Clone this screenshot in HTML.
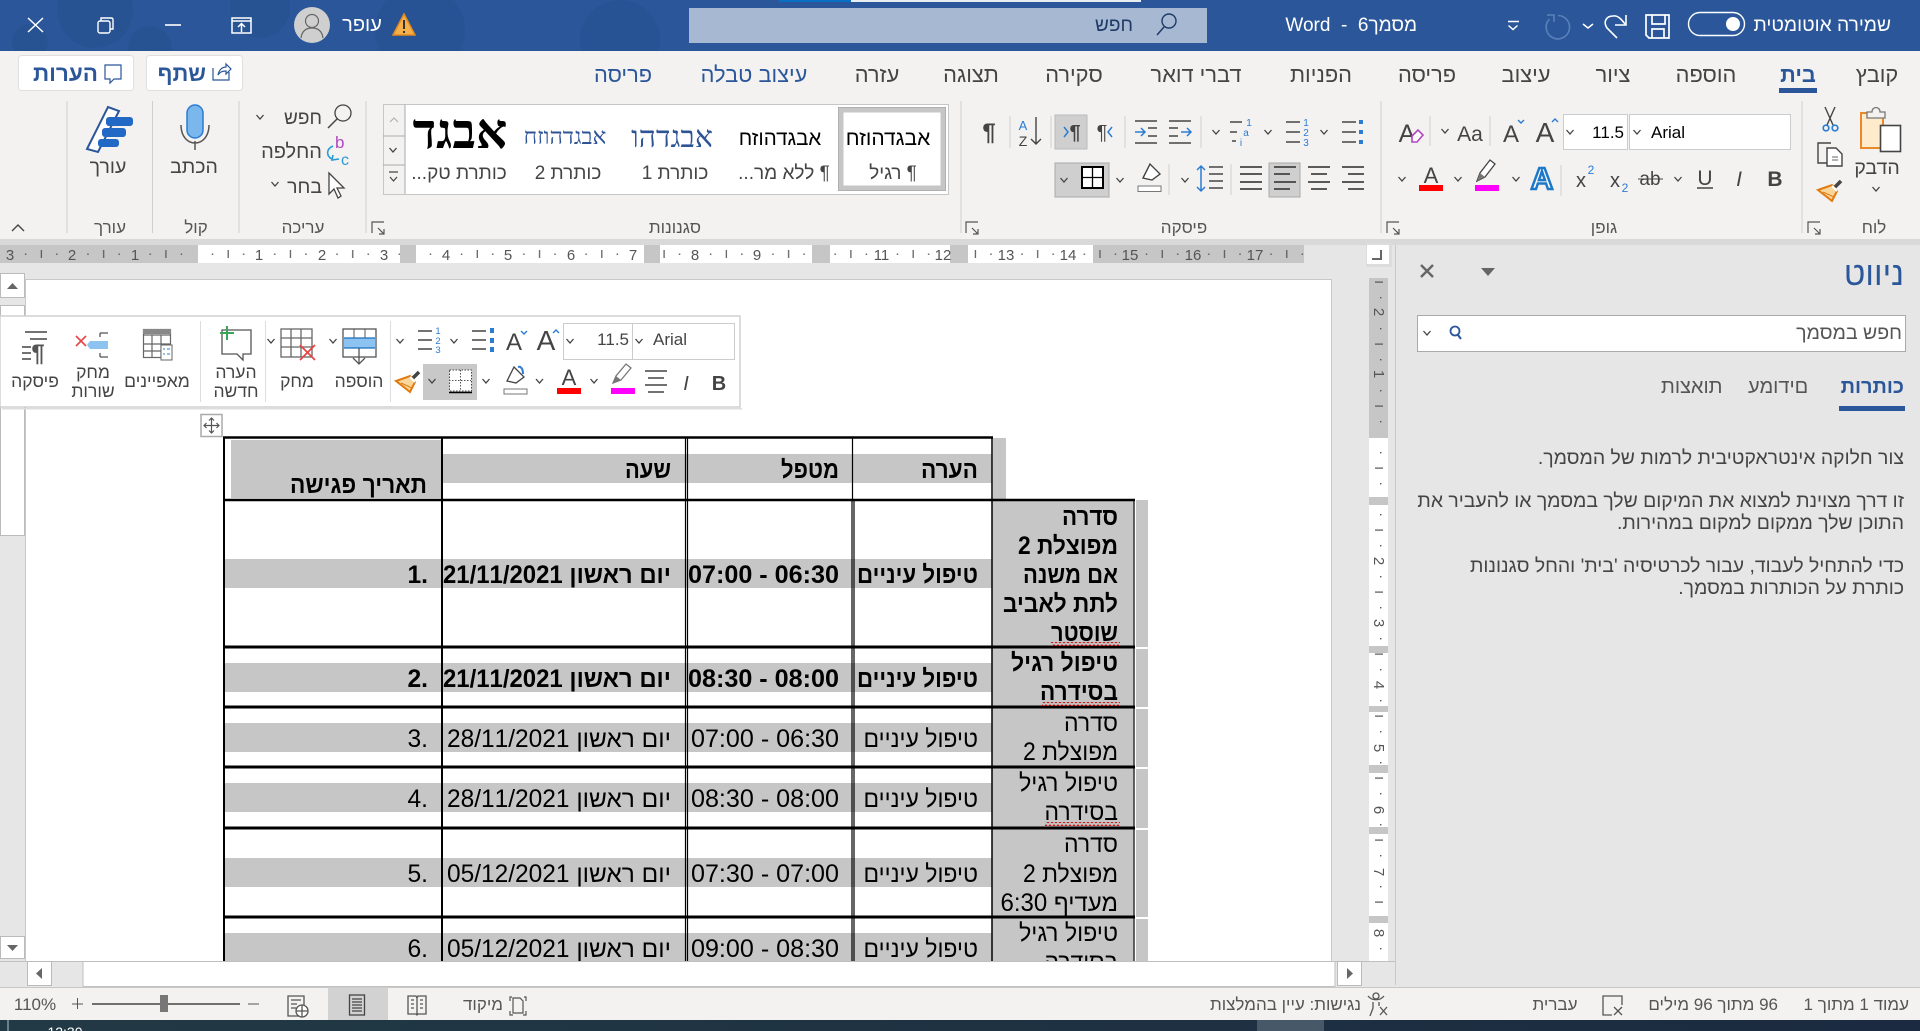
<!DOCTYPE html>
<html lang="he"><head><meta charset="utf-8"><title>Word</title>
<style>
html,body{margin:0;padding:0;background:#e6e6e6;width:1920px;height:1031px;overflow:hidden}
svg{display:block;position:absolute;left:0;top:0;font-family:"Liberation Sans",sans-serif}
text{direction:rtl;white-space:pre}
.c{text-anchor:middle}
.r{text-anchor:start}
.tab{font-size:21.8px;fill:#444}
.g{font-size:17px;fill:#555;text-anchor:middle}
.l{font-size:19.5px;fill:#444;text-anchor:middle}
.f{font-size:17.5px;fill:#444;text-anchor:middle}
.td{font-size:24.6px;fill:#000;text-anchor:start}
.b{font-weight:bold}
.st{font-size:17px;fill:#555}
.nv{font-size:19.4px;fill:#444;text-anchor:start}
.ru{font-size:15px;fill:#555;text-anchor:middle;direction:ltr}
.i{fill:none;stroke:#444;stroke-width:1.5}
.bl{fill:none;stroke:#2b7cd3;stroke-width:1.5}
.sh{fill:#c6c6c6}
.bdo{position:absolute;top:377px;font:20px/20px "Liberation Sans",sans-serif;color:#555;white-space:nowrap}
</style></head><body>
<svg width="1920" height="1031" viewBox="0 0 1920 1031" xmlns="http://www.w3.org/2000/svg">
<defs>
<symbol id="ch" overflow="visible"><path d="M-3.5 -2 L0 2 L3.5 -2" fill="none" stroke="#444" stroke-width="1.3"/></symbol>
<pattern id="hr" x="197" y="245" width="62.27" height="18" patternUnits="userSpaceOnUse">
<rect x="14.8" y="8.5" width="1.4" height="1.4" fill="#555"/><rect x="30.6" y="5" width="1.2" height="8" fill="#555"/><rect x="46" y="8.5" width="1.4" height="1.4" fill="#555"/></pattern>
<pattern id="vr" x="1369" y="437" width="19" height="62" patternUnits="userSpaceOnUse">
<rect x="11" y="15" width="1.4" height="1.4" fill="#555"/><rect x="6" y="30.5" width="8" height="1.2" fill="#555"/><rect x="11" y="46" width="1.4" height="1.4" fill="#555"/></pattern>
<pattern id="sq" x="0" y="0" width="4" height="4" patternUnits="userSpaceOnUse"><path d="M0 3L2 .8L4 3" fill="none" stroke="#c00" stroke-width=".9"/></pattern>
<clipPath id="doc"><rect x="0" y="279" width="1400" height="682"/></clipPath>
</defs>

<!-- title bar -->
<rect width="1920" height="51" fill="#2b579a"/>
<g fill="#25508f" opacity=".55"><circle cx="95" cy="10" r="38"/><circle cx="150" cy="48" r="22"/><circle cx="260" cy="8" r="30"/><circle cx="420" cy="30" r="45"/><circle cx="620" cy="40" r="40"/><circle cx="30" cy="42" r="18"/></g>
<rect x="779" y="0" width="72" height="2" fill="#0a6ec4"/><rect x="851" y="0" width="290" height="2" fill="#e8ecf3"/>
<rect x="689" y="8" width="518" height="35" fill="#a6b8d2"/>
<text x="1133" y="31" class="r" font-size="19" fill="#1e3a66">חפש</text>
<circle cx="1169" cy="21" r="7" fill="none" stroke="#1e3a66" stroke-width="1.4"/><path d="M1164 27L1157 35" stroke="#1e3a66" stroke-width="1.5"/>
<text x="1417" y="31" class="r" font-size="19" fill="#fff">מסמך6  -  Word</text>
<path d="M1508 21.500h11M1508.500 25.500l4.500 4 4.500-4" fill="none" stroke="#fff" stroke-width="1.500"/>
<path d="M1558 15.500a11.700 11.700 0 1 1-8.500 3.500M1547 15h7v7" fill="none" stroke="#5a80b8" stroke-width="1.600"/>
<path d="M1583 24l5 4 5-4" fill="none" stroke="#fff" stroke-width="1.500"/>
<path d="M1617 38L1607 28C1603 22 1606 16 1613 16C1618 15 1622 20 1625 24M1626 15V25H1615" fill="none" stroke="#fff" stroke-width="1.600"/>
<g fill="none" stroke="#fff" stroke-width="1.700"><path d="M1646 15H1669V38H1649L1646 35Z"/><path d="M1652 15v9h13v-9M1652 38v-9h12v9"/></g>
<rect x="1688.5" y="12.5" width="56" height="23" rx="11.5" fill="none" stroke="#fff" stroke-width="1.4"/><circle cx="1733" cy="24" r="7" fill="#fff"/>
<text x="1891" y="31" class="r" font-size="19.200" fill="#fff">שמירה אוטומטית</text>
<path d="M28 18L43 32M43 18L28 32" stroke="#fff" stroke-width="1.5"/>
<g fill="none" stroke="#fff" stroke-width="1.4"><rect x="98" y="21" width="12" height="12" rx="2"/><path d="M101 21v-3h10c2 0 2 1 2 2v9h-3"/></g>
<path d="M165 25H181" stroke="#fff" stroke-width="1.6"/>
<g fill="none" stroke="#fff" stroke-width="1.5"><rect x="232" y="18" width="19" height="15"/><path d="M232 21H251M241.5 32v-8M238 27l3.5-3.5 3.5 3.5"/></g>
<circle cx="312" cy="25" r="18" fill="#cfcfcf"/><g fill="none" stroke="#666" stroke-width="1.2"><circle cx="312" cy="21" r="6.5"/><path d="M301 38c1-7 5-10 11-10s10 3 11 10"/></g>
<text x="362" y="31" class="c" font-size="20" fill="#fff">עופר</text>
<path d="M404 14L415 35H393Z" fill="#f6b04a" stroke="#e08a20" stroke-width="1.5"/><path d="M404 20v9M404 31v2" stroke="#333" stroke-width="2"/>

<!-- ribbon -->
<rect y="51" width="1920" height="188" fill="#f3f2f1"/>
<rect y="239" width="1920" height="6" fill="#d9d9d9"/>
<text x="1877" y="82" class="c tab">קובץ</text>
<text x="1798" y="82" class="c tab b" style="fill:#2b579a">בית</text>
<text x="1706" y="82" class="c tab">הוספה</text>
<text x="1613" y="82" class="c tab">ציור</text>
<text x="1526" y="82" class="c tab">עיצוב</text>
<text x="1427" y="82" class="c tab">פריסה</text>
<text x="1321" y="82" class="c tab">הפניות</text>
<text x="1196" y="82" class="c tab">דברי דואר</text>
<text x="1074" y="82" class="c tab">סקירה</text>
<text x="971" y="82" class="c tab">תצוגה</text>
<text x="877" y="82" class="c tab">עזרה</text>
<text x="754" y="82" class="c tab" style="fill:#2b579a">עיצוב טבלה</text>
<text x="623" y="82" class="c tab" style="fill:#2b579a">פריסה</text>
<rect x="1779" y="88" width="38" height="5" fill="#2b579a"/>
<rect x="146.5" y="55.5" width="96" height="35" rx="3" fill="#fff" stroke="#e1dfdd"/>
<text x="206" y="81" class="r b" font-size="22" fill="#2b579a">שתף</text>
<g fill="none" stroke="#2b579a" stroke-width="1.2"><path d="M213 68v12h16V72"/><path d="M218 75c1-5 4-8 8-8v-3l5 5-5 5v-3c-4 0-6 1-8 4z"/></g>
<rect x="18.5" y="55.5" width="115" height="35" rx="3" fill="#fff" stroke="#e1dfdd"/>
<text x="98" y="81" class="r b" font-size="22.500" fill="#2b579a">הערות</text>
<path d="M105 65h16v14h-7l-4 4v-4h-5z" fill="none" stroke="#2b579a" stroke-width="1.2"/>
<g stroke="#d0cfce"><path d="M67 101V233M152.500 101V233M239 101V233M366 101V233M961 101V233M1381 101V233M1802 101V233"/></g>
<path d="M12 231l6-6 6 6" fill="none" stroke="#444" stroke-width="1.4"/>
<text x="110" y="233" class="g">עורך</text><text x="196" y="233" class="g">קול</text><text x="303" y="233" class="g">עריכה</text><text x="675" y="233" class="g">סגנונות</text><text x="1184" y="233" class="g">פיסקה</text><text x="1604" y="233" class="g">גופן</text><text x="1874" y="233" class="g">לוח</text>
<g fill="none" stroke="#555" stroke-width="1.2"><path d="M372 233v-11h12"/><path d="M378 228l6 6M384 229v5h-5"/><path d="M966 233v-11h12M972 228l6 6M978 229v5h-5"/><path d="M1387 233v-11h12M1393 228l6 6M1399 229v5h-5"/><path d="M1808 233v-11h12M1814 228l6 6M1820 229v5h-5"/></g>

<!-- editor / mic -->
<path d="M87 149L108 107l11 4-21 41z" fill="#fff" stroke="#2b579a" stroke-width="2"/>
<g fill="#2169c4"><rect x="106" y="117" width="27" height="9" rx="3"/><rect x="102" y="128" width="24" height="9" rx="3"/><rect x="98" y="139" width="21" height="8" rx="3"/></g>
<text x="108" y="173" class="l">עורך</text>
<rect x="187" y="105" width="16" height="33" rx="8" fill="#7ab7ec" stroke="#2b7cd3" stroke-width="1.5"/>
<path d="M181 125c0 24 28 24 28 0M195 141v9" fill="none" stroke="#555" stroke-width="1.5"/>
<text x="194" y="173" class="l">הכתב</text>
<!-- editing -->
<circle cx="343" cy="113" r="8" fill="none" stroke="#444" stroke-width="1.3"/><path d="M337 119L328 128" stroke="#444" stroke-width="1.5"/>
<text x="322" y="124" class="r" font-size="19" fill="#444">חפש</text><use href="#ch" x="260" y="117"/>
<text x="322" y="158" class="r" font-size="20" fill="#444">החלפה</text>
<text x="335" y="148" font-size="17" fill="#b146c2" style="direction:ltr">b</text><text x="341" y="165" font-size="16" fill="#2b9bd3" style="direction:ltr">c</text>
<path d="M333 146c-7 3-7 10 -1 13M339 159l-7 1 1-5" fill="none" stroke="#2b9bd3" stroke-width="1.600"/>
<text x="322" y="193" class="r" font-size="19.500" fill="#444">בחר</text><use href="#ch" x="275" y="184"/>
<path d="M329 173v21l5-5 4 9 3-2-4-8h7z" fill="#fff" stroke="#444" stroke-width="1.3"/>

<!-- styles gallery -->
<rect x="383.500" y="104.500" width="565" height="90" fill="#fff" stroke="#c6c6c6"/>
<rect x="384" y="105" width="21" height="89" fill="#f3f2f1"/>
<path d="M405 104.500V194M383 136H405M383 165H405" stroke="#aaa" fill="none"/>
<path d="M390 122l4-4 4 4" fill="none" stroke="#aaa"/><use href="#ch" x="393" y="150"/><path d="M389 172h9M390 177l3.500 4 3.500-4" fill="none" stroke="#444" stroke-width="1.2"/>
<rect x="838.500" y="107.500" width="107" height="83" fill="#fff" stroke="#999"/><rect x="841" y="110" width="102" height="78" fill="none" stroke="#c6c6c6" stroke-width="5"/>
<text x="888" y="145" class="c" font-size="21" fill="#000">אבגדהוזח</text><text x="780" y="145" class="c" font-size="20.500" fill="#000">אבגדהוזח</text>
<text x="672" y="147" class="c" font-size="30" fill="#2f5496" font-family="Liberation Serif">אבגדהו</text>
<text x="565" y="144" class="c" font-size="23" fill="#2f5496" font-family="Liberation Serif">אבגדהוזח</text>
<text x="460" y="148" class="c b" font-size="49" fill="#000" font-family="Liberation Serif">אבגד</text>
<g font-size="19" fill="#444" class="c"><text x="893" y="179" class="c">¶ רגיל</text><text x="784" y="179" class="c">¶ ללא מר...</text><text x="675" y="179" class="c">כותרת 1</text><text x="568" y="179" class="c">כותרת 2</text><text x="459" y="179" class="c">כותרת טק...</text></g>

<!-- clipboard -->
<rect x="1861" y="113" width="22" height="35" fill="#fdebcb" stroke="#e8892a" stroke-width="2"/>
<path d="M1867 118v-6h5c0-6 8-6 8 0h5v6z" fill="#f3f2f1" stroke="#777" stroke-width="1.3"/>
<rect x="1880.500" y="125.500" width="20" height="26" fill="#fff" stroke="#444" stroke-width="1.600"/>
<text x="1877" y="174" class="l">הדבק</text><use href="#ch" x="1876" y="189"/>
<path d="M1825 107l8 18M1835 107l-8 18" fill="none" stroke="#444" stroke-width="1.400"/><g fill="none" stroke="#2b7cd3" stroke-width="1.700"><circle cx="1826" cy="128" r="2.800"/><circle cx="1835" cy="128" r="2.800"/></g>
<path d="M1827 163h-9V143h13" fill="none" stroke="#444" stroke-width="1.400"/><path d="M1827 148h9l6 6v12h-15z" fill="#fff" stroke="#444" stroke-width="1.400"/><path d="M1832 157h6M1832 160h6" stroke="#666"/>
<g id="brush"><path d="M1818 190L1832 185L1837 191L1832 201Z" fill="#fbd69a" stroke="#e07b10" stroke-width="2"/><path d="M1823 192L1834 197" stroke="#e07b10" stroke-width="1"/><path d="M1832 186L1837 191" stroke="#fff" stroke-width="2"/><path d="M1835 187L1841 181" stroke="#444" stroke-width="3.500"/></g>
<!-- font group -->
<rect x="1563.500" y="114.500" width="64" height="35" fill="#fff" stroke="#ccc"/><rect x="1629.500" y="114.500" width="161" height="35" fill="#fff" stroke="#ccc"/>
<text x="1624" y="138" font-size="17" fill="#000" style="direction:ltr;text-anchor:end">11.5</text><text x="1651" y="138" font-size="17" fill="#000" style="direction:ltr">Arial</text>
<use href="#ch" x="1570" y="132"/><use href="#ch" x="1637" y="132"/>
<text x="1511" y="142" font-size="24" fill="#444" class="c">A</text><text x="1545" y="142" font-size="28" fill="#444" class="c">A</text>
<path d="M1518 120l3 3 3-3" fill="none" stroke="#2b7cd3" stroke-width="1.4"/><path d="M1552 122l3-3 3 3" fill="none" stroke="#2b7cd3" stroke-width="1.4"/>
<text x="1470" y="141" font-size="21" fill="#444" class="c" style="direction:ltr">Aa</text><use href="#ch" x="1445" y="131"/>
<text x="1407" y="142" font-size="25" fill="#444" class="c">A</text><path d="M1412 136l6-6 5 5-6 7h-5z" fill="#fff" stroke="#b146c2" stroke-width="1.6"/>
<path d="M1430 116V146M1490 116V146M1561 165V196M1010 116V148M1051 116V148M1125 116V148M1201 116V148M1169 164V195M1231 164V195" stroke="#d0cfce"/>
<use href="#ch" x="1402" y="179"/>
<text x="1431" y="183" font-size="22" fill="#444" class="c">A</text><rect x="1419" y="185" width="24" height="6" fill="#f00"/><use href="#ch" x="1458" y="179"/>
<path d="M1477 181l3-8 10-13 5 4-10 13z" fill="#fff" stroke="#444" stroke-width="1.3"/><path d="M1477 181l3-8 5 4z" fill="#777"/><rect x="1475" y="185" width="24" height="6" fill="#f0f"/><use href="#ch" x="1516" y="179"/>
<text x="1542" y="189" font-weight="bold" fill="#fff" stroke="#1e78c8" stroke-width="2.500" class="c" style="font-size:31px">A</text>
<text x="1581" y="187" font-size="20" fill="#444" class="c" style="direction:ltr">x</text><text x="1591" y="174" font-size="12" fill="#2b7cd3" class="c" style="direction:ltr">2</text>
<text x="1615" y="187" font-size="20" fill="#444" class="c" style="direction:ltr">x</text><text x="1625" y="192" font-size="12" fill="#2b7cd3" class="c" style="direction:ltr">2</text>
<text x="1650" y="185" font-size="19" fill="#444" class="c" style="direction:ltr">ab</text><path d="M1638 179H1663" stroke="#444"/><use href="#ch" x="1678" y="179"/>
<text x="1705" y="185" font-size="21" fill="#444" class="c" style="direction:ltr">U</text><path d="M1697 188H1713" stroke="#444" stroke-width="1.5"/>
<text x="1739" y="186" font-size="21" font-style="italic" fill="#444" class="c" style="direction:ltr">I</text>
<text x="1775" y="186" font-size="21" font-weight="bold" fill="#444" class="c" style="direction:ltr">B</text>
<!-- paragraph group -->
<rect x="1055" y="115" width="32" height="34" fill="#cfcfcf" stroke="#bbb"/><rect x="1055" y="163" width="54" height="34" fill="#cfcfcf" stroke="#aaa"/><rect x="1269" y="163" width="31" height="34" fill="#cfcfcf" stroke="#aaa"/>
<text x="989" y="140" font-size="24" fill="#444" class="c b" style="direction:ltr">¶</text>
<text x="1023" y="130" font-size="13" fill="#2b7cd3" class="c" style="direction:ltr">A</text><text x="1023" y="146" font-size="14" fill="#444" class="c" style="direction:ltr">Z</text><path d="M1036 117v27M1031 139l5 5 5-5" fill="none" stroke="#444" stroke-width="1.4"/>
<text x="1075" y="139" font-size="20" fill="#444" class="c b" style="direction:ltr">¶</text><path d="M1064 127l4 5-4 5" fill="none" stroke="#2b7cd3" stroke-width="1.5"/>
<text x="1102" y="139" font-size="20" fill="#444" class="c" style="direction:ltr">¶</text><path d="M1112 127l-4 5 4 5" fill="none" stroke="#2b7cd3" stroke-width="1.5"/>
<g fill="none" stroke="#444" stroke-width="1.6"><path d="M1135 121h22M1148 128h9M1148 136h9M1135 143h22"/><path d="M1169 121h22M1169 128h9M1169 136h9M1169 143h22"/></g>
<path d="M1135 132h10M1141 128l4 4-4 4" class="bl"/><path d="M1181 132h10M1187 128l4 4-4 4" class="bl"/>
<use href="#ch" x="1216" y="132"/><path d="M1230 122h12M1230 132h7M1232 141h4" class="i"/><text x="1249" y="126" font-size="10" fill="#2b7cd3" class="c" style="direction:ltr">1</text><text x="1246" y="136" font-size="10" fill="#2b7cd3" class="c" style="direction:ltr">a</text><text x="1241" y="146" font-size="10" fill="#2b7cd3" class="c" style="direction:ltr">i</text>
<use href="#ch" x="1268" y="132"/><path d="M1286 122h14M1286 132h14M1286 142h14" class="i"/><text x="1306" y="126" font-size="10" fill="#2b7cd3" class="c" style="direction:ltr">1</text><text x="1306" y="136" font-size="10" fill="#2b7cd3" class="c" style="direction:ltr">2</text><text x="1306" y="146" font-size="10" fill="#2b7cd3" class="c" style="direction:ltr">3</text>
<use href="#ch" x="1324" y="132"/><path d="M1342 122h14M1342 132h14M1342 142h14" class="i"/><path d="M1359 120h4v4h-4zM1359 130h4v4h-4zM1359 140h4v4h-4z" fill="#2b7cd3"/>
<use href="#ch" x="1064" y="180"/><rect x="1082" y="167" width="21" height="21" fill="#fff" stroke="#000" stroke-width="2"/><path d="M1092.500 167v21M1082 177.500h21" stroke="#000" stroke-width="1.300"/>
<use href="#ch" x="1120" y="180"/><path d="M1143 178l7-14 10 10-8 6z" fill="#fff" stroke="#444" stroke-width="1.4"/><rect x="1138" y="186" width="23" height="5.500" fill="#fff" stroke="#777"/>
<use href="#ch" x="1185" y="180"/><path d="M1201 166v25M1197 170l4-4 4 4M1197 187l4 4 4-4" class="bl"/><path d="M1209 167h14M1209 174h14M1209 181h14M1209 188h14" class="i"/>
<g fill="none" stroke="#444" stroke-width="1.800"><path d="M1240 167h22M1240 174h22M1240 182h22M1240 189h22"/><path d="M1274 167h22M1274 174h16M1274 182h22M1274 189h16"/><path d="M1308 167h22M1311 174h16M1308 182h22M1311 189h16"/><path d="M1342 167h22M1348 174h16M1342 182h22M1348 189h16"/></g>

<!-- ruler -->
<rect y="245" width="1920" height="34" fill="#e6e6e6"/>
<rect x="0" y="245" width="1304" height="18" fill="#fff"/>
<rect x="0" y="245" width="198" height="18" class="sh"/><rect x="400" y="245" width="16" height="18" class="sh"/><rect x="644" y="245" width="16" height="18" class="sh"/><rect x="812" y="245" width="18" height="18" class="sh"/><rect x="950" y="245" width="18" height="18" class="sh"/><rect x="1093" y="245" width="211" height="18" class="sh"/>
<rect x="0" y="245" width="1304" height="18" fill="url(#hr)"/>
<rect x="812" y="245" width="18" height="18" class="sh"/><rect x="400" y="245" width="16" height="18" class="sh"/><rect x="644" y="245" width="16" height="18" class="sh"/><rect x="950" y="245" width="18" height="18" class="sh"/>
<text x="10" y="260" class="ru">3</text><text x="72" y="260" class="ru">2</text><text x="135" y="260" class="ru">1</text><text x="259" y="260" class="ru">1</text><text x="322" y="260" class="ru">2</text><text x="384" y="260" class="ru">3</text><text x="446" y="260" class="ru">4</text><text x="508" y="260" class="ru">5</text><text x="571" y="260" class="ru">6</text><text x="633" y="260" class="ru">7</text><text x="695" y="260" class="ru">8</text><text x="757" y="260" class="ru">9</text><text x="881.500" y="260" class="ru">11</text><text x="943" y="260" class="ru">12</text><text x="1006" y="260" class="ru">13</text><text x="1068" y="260" class="ru">14</text><text x="1130" y="260" class="ru">15</text><text x="1193" y="260" class="ru">16</text><text x="1255" y="260" class="ru">17</text>
<rect x="1366" y="243" width="26" height="24" fill="#dcdcdc"/><rect x="1367" y="245" width="22" height="19" fill="#fff"/><path d="M1372 258h8v-8h2v10h-10z" fill="#666"/>

<!-- page -->
<rect x="25" y="279" width="1306" height="682" fill="#fff"/><path d="M25 279.500H1331.500V961" fill="none" stroke="#c8c8c8"/>
<rect x="0" y="279" width="25" height="682" fill="#e6e6e6"/>
<path d="M25.500 279V961" stroke="#c8c8c8"/>
<rect x=".5" y="273.500" width="24" height="24" fill="#fff" stroke="#bbb"/><path d="M7 289l5.500-6 5.500 6z" fill="#666"/>
<rect x=".5" y="305.500" width="24" height="230" fill="#fff" stroke="#bbb"/>
<rect x=".5" y="936.500" width="24" height="22" fill="#fff" stroke="#bbb"/><path d="M7 945l5.500 6 5.500-6z" fill="#666"/>

<!-- vertical ruler -->
<rect x="1369" y="278" width="19" height="708" fill="#fff"/><rect x="1369" y="278" width="19" height="160" class="sh"/>
<rect x="1369" y="278" width="19" height="708" fill="url(#vr)"/>
<g class="sh"><rect x="1369" y="497" width="19" height="8"/><rect x="1369" y="646" width="19" height="7"/><rect x="1369" y="706" width="19" height="6"/><rect x="1369" y="765" width="19" height="8"/><rect x="1369" y="827" width="19" height="7"/><rect x="1369" y="916" width="19" height="7"/><rect x="1369" y="975" width="19" height="7"/></g>
<text transform="translate(1374,312) rotate(90)" class="ru">2</text><text transform="translate(1374,374) rotate(90)" class="ru">1</text><text transform="translate(1374,561) rotate(90)" class="ru">2</text><text transform="translate(1374,623) rotate(90)" class="ru">3</text><text transform="translate(1374,685) rotate(90)" class="ru">4</text><text transform="translate(1374,748) rotate(90)" class="ru">5</text><text transform="translate(1374,810) rotate(90)" class="ru">6</text><text transform="translate(1374,872) rotate(90)" class="ru">7</text><text transform="translate(1374,933) rotate(90)" class="ru">8</text>
<path d="M1395.500 245V985" stroke="#c8c8c8"/>

<!-- table -->
<g clip-path="url(#doc)">
<rect x="231" y="440" width="210" height="58" class="sh"/>
<rect x="443" y="454" width="549" height="29" class="sh"/>
<rect x="993" y="438" width="13" height="62" class="sh"/>
<rect x="992" y="500" width="142" height="461" class="sh"/>
<rect x="1136" y="500" width="12" height="147" class="sh"/><rect x="1136" y="649" width="12" height="58" class="sh"/><rect x="1136" y="709" width="12" height="58" class="sh"/><rect x="1136" y="769" width="12" height="59" class="sh"/><rect x="1136" y="830" width="12" height="87" class="sh"/><rect x="1136" y="919" width="12" height="42" class="sh"/>
<rect x="223" y="559" width="769" height="29" class="sh"/><rect x="223" y="663" width="769" height="29" class="sh"/><rect x="223" y="723" width="769" height="29" class="sh"/><rect x="223" y="783" width="769" height="29" class="sh"/><rect x="223" y="858" width="769" height="29" class="sh"/><rect x="223" y="933" width="769" height="28" class="sh"/>
<g stroke="#000" fill="none">
<path d="M224 437V961M442 437V961" stroke-width="2"/>
<path d="M685.500 437V961M687.500 437V961M852.500 437V500M854 500V961" stroke-width="1.2"/>
<path d="M852 500V961" stroke-width="1.2"/>
<path d="M992 437V961" stroke-width="1.500"/>
<path d="M1134 500V961" stroke-width="1.500" stroke="#333"/>
<path d="M223 437.500H993" stroke-width="2.500"/>
<path d="M223 500H1135" stroke-width="2.500"/>
<path d="M223 647H1135M223 707H1135M223 767H1135M223 828H1135M223 917H1135" stroke-width="3"/>
</g>
<text x="427" y="493" class="td b" textLength="137" lengthAdjust="spacingAndGlyphs">תאריך פגישה</text><text x="671" y="478" class="td b" textLength="46" lengthAdjust="spacingAndGlyphs">שעה</text><text x="839" y="478" class="td b" textLength="58" lengthAdjust="spacingAndGlyphs">מטפל</text><text x="978" y="478" class="td b" textLength="57" lengthAdjust="spacingAndGlyphs">הערה</text>
<text x="1118" y="525" class="td b" textLength="56" lengthAdjust="spacingAndGlyphs">סדרה</text><text x="1118" y="554" class="td b" textLength="100" lengthAdjust="spacingAndGlyphs">מפוצלת 2</text><text x="1118" y="583" class="td b" textLength="95" lengthAdjust="spacingAndGlyphs">אם משנה</text><text x="1118" y="612" class="td b" textLength="115" lengthAdjust="spacingAndGlyphs">לתת לאביב</text><text x="1118" y="641" class="td b" textLength="67" lengthAdjust="spacingAndGlyphs">שוסטר</text>
<text x="428" y="583" class="td b" style="direction:ltr;text-anchor:end">1.</text><text x="671" y="583" class="td b" textLength="228" lengthAdjust="spacingAndGlyphs">יום ראשון 21/11/2021</text><text x="839" y="583" class="td b" style="direction:ltr;text-anchor:end" textLength="151" lengthAdjust="spacingAndGlyphs">07:00 - 06:30</text><text x="978" y="583" class="td b" textLength="121" lengthAdjust="spacingAndGlyphs">טיפול עיניים</text>
<text x="1118" y="671" class="td b" textLength="107" lengthAdjust="spacingAndGlyphs">טיפול רגיל</text><text x="1118" y="700" class="td b" textLength="78" lengthAdjust="spacingAndGlyphs">בסידרה</text>
<text x="428" y="687" class="td b" style="direction:ltr;text-anchor:end">2.</text><text x="671" y="687" class="td b" textLength="228" lengthAdjust="spacingAndGlyphs">יום ראשון 21/11/2021</text><text x="839" y="687" class="td b" style="direction:ltr;text-anchor:end" textLength="151" lengthAdjust="spacingAndGlyphs">08:30 - 08:00</text><text x="978" y="687" class="td b" textLength="121" lengthAdjust="spacingAndGlyphs">טיפול עיניים</text>
<text x="1118" y="731" class="td" textLength="54" lengthAdjust="spacingAndGlyphs">סדרה</text><text x="1118" y="760" class="td" textLength="95" lengthAdjust="spacingAndGlyphs">מפוצלת 2</text>
<text x="428" y="747" class="td" style="direction:ltr;text-anchor:end">3.</text><text x="671" y="747" class="td" textLength="224" lengthAdjust="spacingAndGlyphs">יום ראשון 28/11/2021</text><text x="839" y="747" class="td" style="direction:ltr;text-anchor:end" textLength="148" lengthAdjust="spacingAndGlyphs">07:00 - 06:30</text><text x="978" y="747" class="td" textLength="114.500" lengthAdjust="spacingAndGlyphs">טיפול עיניים</text>
<text x="1118" y="791" class="td" textLength="99" lengthAdjust="spacingAndGlyphs">טיפול רגיל</text><text x="1118" y="820" class="td" textLength="73.500" lengthAdjust="spacingAndGlyphs">בסידרה</text>
<text x="428" y="807" class="td" style="direction:ltr;text-anchor:end">4.</text><text x="671" y="807" class="td" textLength="224" lengthAdjust="spacingAndGlyphs">יום ראשון 28/11/2021</text><text x="839" y="807" class="td" style="direction:ltr;text-anchor:end" textLength="148" lengthAdjust="spacingAndGlyphs">08:30 - 08:00</text><text x="978" y="807" class="td" textLength="114.500" lengthAdjust="spacingAndGlyphs">טיפול עיניים</text>
<text x="1118" y="852" class="td" textLength="54" lengthAdjust="spacingAndGlyphs">סדרה</text><text x="1118" y="882" class="td" textLength="95" lengthAdjust="spacingAndGlyphs">מפוצלת 2</text><text x="1118" y="911" class="td" textLength="117.500" lengthAdjust="spacingAndGlyphs">מעדיף 6:30</text>
<text x="428" y="882" class="td" style="direction:ltr;text-anchor:end">5.</text><text x="671" y="882" class="td" textLength="224" lengthAdjust="spacingAndGlyphs">יום ראשון 05/12/2021</text><text x="839" y="882" class="td" style="direction:ltr;text-anchor:end" textLength="148" lengthAdjust="spacingAndGlyphs">07:30 - 07:00</text><text x="978" y="882" class="td" textLength="114.500" lengthAdjust="spacingAndGlyphs">טיפול עיניים</text>
<text x="1118" y="941" class="td" textLength="99" lengthAdjust="spacingAndGlyphs">טיפול רגיל</text><text x="1118" y="970" class="td" textLength="73.500" lengthAdjust="spacingAndGlyphs">בסידרה</text>
<text x="428" y="957" class="td" style="direction:ltr;text-anchor:end">6.</text><text x="671" y="957" class="td" textLength="224" lengthAdjust="spacingAndGlyphs">יום ראשון 05/12/2021</text><text x="839" y="957" class="td" style="direction:ltr;text-anchor:end" textLength="148" lengthAdjust="spacingAndGlyphs">09:00 - 08:30</text><text x="978" y="957" class="td" textLength="114.500" lengthAdjust="spacingAndGlyphs">טיפול עיניים</text>
<rect x="1051" y="642" width="69" height="4" fill="url(#sq)"/><rect x="1042" y="702" width="78" height="4" fill="url(#sq)"/><rect x="1045" y="822" width="75" height="4" fill="url(#sq)"/>
</g>
<rect x="201" y="414.500" width="21" height="22" fill="#fff" stroke="#aaa" stroke-width="1.500"/><path d="M211.500 418v15M204 425.500h15M209 420.500l2.500-2.500 2.500 2.500M209 430.500l2.500 2.500 2.500-2.500M206.500 423l-2.500 2.500 2.500 2.500M216.500 423l2.500 2.500-2.500 2.500" fill="none" stroke="#555" stroke-width="1.200"/>

<!-- floating toolbar -->
<rect x="0" y="316" width="740" height="91" fill="#fff" stroke="#d0d0d0" stroke-width="1.500"/>
<rect x="2" y="408" width="740" height="1.500" fill="#ddd"/>
<path d="M200.500 321V402M265.500 321V402M390.500 321V402" stroke="#ddd"/>
<rect x="563.500" y="323.500" width="69" height="36" fill="#fff" stroke="#ccc"/><rect x="632.500" y="323.500" width="102" height="36" fill="#fff" stroke="#ccc"/>
<text x="629" y="345" font-size="17" fill="#444" style="direction:ltr;text-anchor:end">11.5</text><text x="653" y="345" font-size="17" fill="#444" style="direction:ltr">Arial</text><use href="#ch" x="639" y="341"/><use href="#ch" x="570" y="341"/>
<text x="546" y="350" font-size="28" fill="#444" class="c">A</text><path d="M553 333l3-3 3 3" fill="none" stroke="#2b7cd3" stroke-width="1.400"/>
<text x="514" y="350" font-size="24" fill="#444" class="c">A</text><path d="M521 331l3 3 3-3" fill="none" stroke="#2b7cd3" stroke-width="1.400"/>
<path d="M472 331h14M472 340h14M472 349h14" class="i"/><path d="M490 328h4v5h-4zM490 338h4v5h-4zM490 347h4v5h-4z" fill="#2b7cd3"/>
<use href="#ch" x="454" y="341"/><path d="M418 331h14M418 340h14M418 349h14" class="i"/><text x="438" y="334" font-size="9.500" fill="#2b7cd3" class="c" style="direction:ltr">1</text><text x="438" y="344" font-size="9.500" fill="#2b7cd3" class="c" style="direction:ltr">2</text><text x="438" y="353" font-size="9.500" fill="#2b7cd3" class="c" style="direction:ltr">3</text><use href="#ch" x="400" y="341"/>
<text x="719" y="390" font-size="20" font-weight="bold" fill="#444" class="c" style="direction:ltr">B</text>
<text x="686" y="390" font-size="20" font-style="italic" fill="#444" class="c" style="direction:ltr">I</text>
<path d="M645 371h22M648 378h16M645 385h22M648 392h16" class="i"/>
<path d="M613 383l3-7 10-12 5 4-10 12z" fill="#fff" stroke="#777" stroke-width="1.300"/><path d="M613 383l3-7 5 4z" fill="#777"/><rect x="611" y="388" width="24" height="6" fill="#f0f"/><use href="#ch" x="594" y="381"/>
<text x="569" y="385" font-size="22" fill="#444" class="c">A</text><rect x="557" y="388" width="24" height="6" fill="#f00"/><use href="#ch" x="539.500" y="381"/>
<path d="M507 381l7-14 10 10-8 6z" fill="#fff" stroke="#444" stroke-width="1.300"/><path d="M518 367c3-1 5 2 5 7" fill="none" stroke="#2b7cd3" stroke-width="2"/><rect x="504" y="389" width="23" height="5" fill="#fff" stroke="#777"/><use href="#ch" x="486" y="381"/>
<rect x="423" y="364" width="54" height="36" fill="#c8c8c8"/><use href="#ch" x="432" y="381"/>
<rect x="449.500" y="370" width="22" height="21" fill="#fff" stroke="#444" stroke-dasharray="1.500 1.500"/><path d="M460.500 370v21M449 380.500h22" stroke="#555" stroke-dasharray="1.500 1.500"/><path d="M449 392.500H472" stroke="#000" stroke-width="1.500"/>
<g transform="translate(-1422,191)"><path d="M1818 190L1832 185L1837 191L1832 201Z" fill="#fbd69a" stroke="#e07b10" stroke-width="2"/><path d="M1823 192L1834 197" stroke="#e07b10" stroke-width="1"/><path d="M1832 186L1837 191" stroke="#fff" stroke-width="2"/><path d="M1835 187L1841 181" stroke="#444" stroke-width="3.500"/></g>
<rect x="343" y="329" width="33" height="28" fill="#fff" stroke="#555" stroke-width="1.300"/><rect x="344" y="338" width="31" height="10" fill="#8cc3f0"/><path d="M344 348H375M344 338H375" stroke="#1a6dbb" stroke-width="1.300"/><path d="M354 329v9M365 329v9" stroke="#555"/><path d="M359 348v16M353 358l6 6 6-6" fill="#fff" stroke="#555" stroke-width="1.300"/>
<use href="#ch" x="333" y="341"/><text x="359" y="387" class="f">הוספה</text>
<g fill="none" stroke="#666" stroke-width="1.300"><rect x="281" y="329" width="31" height="28"/><path d="M291 329v28M301 329v28M281 338h31M281 347h31"/></g><path d="M300 345l15 15M315 345l-15 15" stroke="#e64545" stroke-width="1.800"/>
<use href="#ch" x="271" y="341"/><text x="297" y="387" class="f">מחק</text>
<path d="M222 330h29v24h-8v6l-6-6h-15z" fill="#fff" stroke="#555" stroke-width="1.300"/><path d="M227 326v14M220 333h14" stroke="#3aa655" stroke-width="2"/>
<text x="236" y="378" class="f">הערה</text><text x="236" y="397" class="f">חדשה</text>
<g fill="none" stroke="#666" stroke-width="1.200"><rect x="143.500" y="329.500" width="27" height="28"/><path d="M143 335H170M152 335v22M161 335v22M143 344H170M143 351H165"/></g><rect x="143" y="329" width="28" height="5" fill="#888"/><rect x="161" y="345" width="11" height="15" fill="#fff" stroke="#666"/><path d="M163 349h2M167 349h3M163 354h2M167 354h3" stroke="#2b7cd3"/>
<text x="157" y="387" class="f">מאפיינים</text>
<path d="M76 336l10 10M86 336l-10 10" stroke="#e64545" stroke-width="1.600"/><path d="M90 341h18v8H90l-3-4z" fill="#8cc3f0"/><path d="M100 333h8M100 357h8M100 333v4M100 357v-4" fill="none" stroke="#555" stroke-width="1.300"/>
<text x="93" y="378" class="f">מחק</text><text x="93" y="397" class="f">שורות</text>
<path d="M25 332h22M30 339h17M22 347h9M22 353h9M22 359h9" class="i"/><text x="38" y="361" font-size="24" fill="#555" class="c b" style="direction:ltr">¶</text>
<text x="35" y="387" class="f">פיסקה</text>

<!-- nav pane -->
<text x="1904" y="285" class="r" font-size="33" fill="#2b579a">ניווט</text>
<path d="M1421 265l12 12M1433 265l-12 12" stroke="#666" stroke-width="2.400"/><path d="M1481 268h14l-7 8z" fill="#666"/>
<rect x="1417.500" y="315.500" width="488" height="36" fill="#fff" stroke="#aaa"/>
<text x="1902" y="339" class="r" font-size="19.500" fill="#555">חפש במסמך</text>
<circle cx="1455" cy="331" r="4.500" fill="none" stroke="#2b579a" stroke-width="1.800"/><path d="M1458 335l3 4" stroke="#2b579a" stroke-width="2"/><use href="#ch" x="1427" y="333"/>
<text x="1904" y="393" class="r b" font-size="20" fill="#2b579a">כותרות</text><rect x="1839" y="406" width="66" height="5" fill="#2b579a"/>
<text x="1904" y="464" class="nv">צור חלוקה אינטראקטיבית לרמות של המסמך.</text>
<text x="1904" y="507" class="nv">זו דרך מצוינת למצוא את המיקום שלך במסמך או להעביר את</text>
<text x="1904" y="529" class="nv">התוכן שלך ממקום למקום במהירות.</text>
<text x="1904" y="572" class="nv">כדי להתחיל לעבוד, עבור לכרטיסיה 'בית' והחל סגנונות</text>
<text x="1904" y="594" class="nv">כותרת על הכותרות במסמך.</text>

<!-- horizontal scrollbar -->
<rect x="0" y="961" width="1395" height="26" fill="#e6e6e6"/><path d="M0 961.500H1395" stroke="#c0c0c0"/>
<rect x="83" y="961.500" width="1252" height="25" fill="#fff" stroke="#c0c0c0"/>
<rect x="27.500" y="961.500" width="24" height="24" fill="#fff" stroke="#bbb"/><path d="M42 968v11l-6-5.500z" fill="#666"/>
<rect x="1337.500" y="961.500" width="24" height="24" fill="#fff" stroke="#bbb"/><path d="M1347 968v11l6-5.500z" fill="#666"/>

<!-- status bar -->
<rect y="987" width="1920" height="33" fill="#f3f2f1"/><path d="M0 987.500H1920" stroke="#c8c8c8"/>
<text x="35" y="1010" font-size="17" fill="#555" class="c" style="direction:ltr">110%</text>
<path d="M72 1004h11M77.500 998v11" stroke="#555"/><path d="M92 1004H240" stroke="#444" stroke-width="1.600"/><rect x="160" y="995" width="8" height="17" fill="#777"/><path d="M248 1004h11" stroke="#555"/>
<rect x="328" y="987.500" width="60" height="32.500" fill="#d2d2d2"/>
<g fill="none" stroke="#555" stroke-width="1.300"><path d="M288 996h16v20h-16z"/><path d="M291 1000h10M291 1004h6M291 1008h5"/><circle cx="302" cy="1011" r="6" fill="#fff"/><path d="M296 1011h12M302 1005v12"/></g>
<g fill="none" stroke="#444" stroke-width="1.300"><rect x="349.500" y="995" width="15" height="20"/><path d="M352 999h10M352 1002h10M352 1005h10M352 1008h10M352 1011h10"/></g>
<g fill="none" stroke="#555" stroke-width="1.300"><path d="M408 996h8l1 2 1-2h8v18h-8l-1 1-1-1h-8zM417 998v16"/><path d="M411 1000h3M411 1004h3M411 1008h3M420 1000h3M420 1004h3M420 1008h3"/></g>
<text x="483" y="1010" class="st c">מיקוד</text>
<g fill="none" stroke="#555" stroke-width="1.200"><path d="M512 997l-2 0v4M524 997l2 0v4M510 1011v4h3M526 1011v4h-3M513 998h7l3 3v12h-10z"/></g>
<text x="1361" y="1010" class="st r">נגישות: עיין בהמלצות</text>
<g fill="none" stroke="#555" stroke-width="1.300"><circle cx="1376" cy="996" r="3"/><path d="M1368 996c4 5 12 5 16 0M1373 1002v6l-3 8M1379 1002v4"/><path d="M1380 1007l7 8M1387 1007l-7 8"/></g>
<text x="1555" y="1010" class="st c">עברית</text>
<g fill="none" stroke="#555" stroke-width="1.300"><path d="M1608 996h-5v19h9M1608 996h14v9"/><path d="M1614 1007l8 8M1622 1007l-8 8"/></g>
<text x="1778" y="1010" class="st r">96 מתוך 96 מילים</text>
<text x="1909" y="1010" class="st r">עמוד 1 מתוך 1</text>

<!-- taskbar -->
<defs><linearGradient id="tb" x1="0" x2="1" y1="0" y2="0"><stop offset="0" stop-color="#223a45"/><stop offset="1" stop-color="#1b2a40"/></linearGradient></defs>
<rect y="1020" width="1920" height="11" fill="url(#tb)"/>
<rect x="7" y="1020" width="2" height="11" fill="#6d7f88"/>
<rect x="1257" y="1020" width="67" height="11" fill="#475868"/>
<text x="65" y="1037" font-size="14" fill="#fff" class="c" style="direction:ltr">12:30</text>
</svg>
<bdo dir="ltr" class="bdo" style="left:1748px">עמודים</bdo>
<bdo dir="ltr" class="bdo" style="left:1661px">תוצאות</bdo>
</body></html>
